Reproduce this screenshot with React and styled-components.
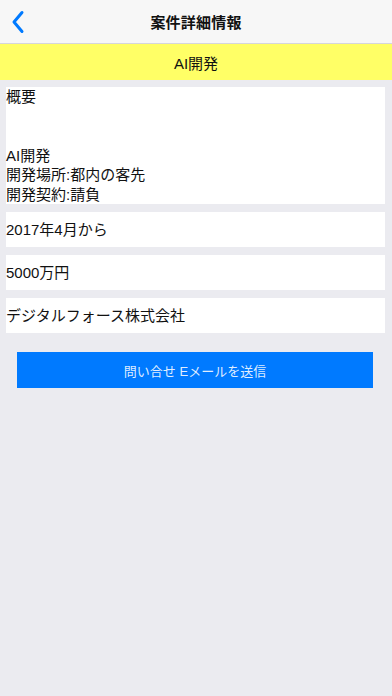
import React from "react";
import styled, { createGlobalStyle } from "styled-components";

const GlobalStyle = createGlobalStyle`
  html, body {
    margin: 0;
    padding: 0;
    background: #ebebf0;
  }
  body {
    font-family: "Liberation Sans", "Noto Sans CJK JP", sans-serif;
    color: #111;
  }
`;

const Screen = styled.div`
  display: flex;
  flex-direction: column;
  width: 392px;
  min-height: 696px;
  background: #ebebf0;
`;

const NavBar = styled.div`
  position: relative;
  display: flex;
  align-items: center;
  justify-content: center;
  height: 43px;
  background: #f7f7f7;
  border-bottom: 1px solid #d6d6da;
`;

const BackButton = styled.button`
  position: absolute;
  left: 6px;
  top: 8px;
  display: flex;
  align-items: center;
  justify-content: center;
  width: 24px;
  height: 28px;
  padding: 0;
  border: none;
  background: none;
`;

const Title = styled.span`
  font-size: 15px;
  font-weight: 700;
  letter-spacing: 0.2px;
`;

const Banner = styled.div`
  display: flex;
  align-items: center;
  justify-content: center;
  height: 36px;
  background: #ffff66;
  font-size: 15px;
`;

const Content = styled.div`
  display: flex;
  flex-direction: column;
  gap: 8px;
  padding: 7px 7px 0 6px;
`;

const Card = styled.div`
  display: flex;
  align-items: ${(p) => (p.$multi ? "flex-start" : "center")};
  min-height: 35px;
  background: #fff;
  font-size: 15px;
  line-height: 19.5px;
  white-space: pre-line;
`;

const SendButton = styled.button`
  align-self: flex-start;
  width: 356px;
  height: 36px;
  margin: 11px 0 0 11px;
  border: none;
  background: #007aff;
  color: rgba(255, 255, 255, 0.88);
  font-family: inherit;
  font-size: 13px;
`;

const overview = "概要\n\n\nAI開発\n開発場所:都内の客先\n開発契約:請負";

export default function App() {
  return (
    <Screen>
      <GlobalStyle />
      <NavBar>
        <BackButton>
          <svg width="16" height="24" viewBox="0 0 16 24">
            <path
              d="M12 2.5 L4 12 L12 21.5"
              fill="none"
              stroke="#007aff"
              strokeWidth="3"
              strokeLinecap="round"
              strokeLinejoin="round"
            />
          </svg>
        </BackButton>
        <Title>案件詳細情報</Title>
      </NavBar>
      <Banner>AI開発</Banner>
      <Content>
        <Card $multi>{overview}</Card>
        <Card>2017年4月から</Card>
        <Card>5000万円</Card>
        <Card>デジタルフォース株式会社</Card>
        <SendButton>問い合せ Eメールを送信</SendButton>
      </Content>
    </Screen>
  );
}
